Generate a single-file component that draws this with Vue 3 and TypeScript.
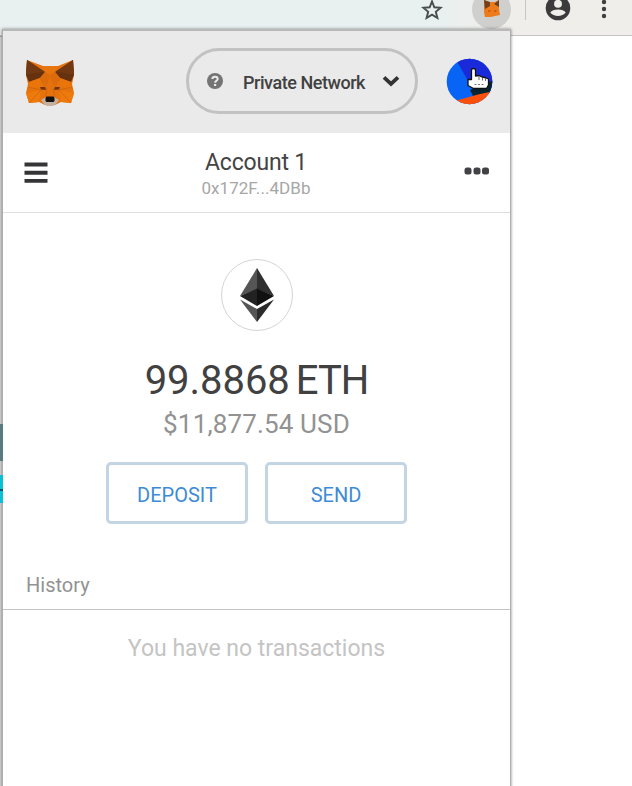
<script setup lang="ts">
interface Action {
  id: string
  label: string
}

const network: string = 'Private Network'
const account = { name: 'Account 1', address: '0x172F...4DBb' }
const balance = { amount: '99.8868', unit: 'ETH', fiat: '$11,877.54 USD' }
const actions: Action[] = [
  { id: 'deposit', label: 'DEPOSIT' },
  { id: 'send', label: 'SEND' },
]
</script>

<template>
  <div class="browser">
    <div class="toolbar">
      <svg class="star" width="22" height="22" viewBox="0 0 22 22">
        <path d="M11 2.4 13.3 8.3 19.8 8.7 14.8 12.8 16.4 19 11 15.6 5.6 19 7.2 12.8 2.2 8.7 8.7 8.3Z" fill="none" stroke="#4a4d4e" stroke-width="1.9" />
      </svg>
      <div class="extension">
        <svg width="18" height="18" viewBox="0 0 18 18">
          <path d="M1 0 6 2 12 2 16 0 16 9 17 15 12 16 8 17 2 17 1 12Z" fill="#ee7b1b" />
          <path d="M1 0 7 2 7 6 2 9ZM16 0 11 4 16 7Z" fill="#70401f" />
          <path d="M6 10 8 11 5 12ZM12 10 14 11 11 12Z" fill="#a84d08" />
        </svg>
      </div>
      <i class="divider"></i>
      <svg class="profile" width="26" height="26" viewBox="0 0 26 26">
        <circle cx="13" cy="13" r="12.3" fill="#3b3b3b" />
        <circle cx="13" cy="8.8" r="4" fill="#efeeeb" />
        <path d="M5.3 17.5C7.5 13.6 18.5 13.6 20.7 17.5 17.5 22 8.5 22 5.3 17.5Z" fill="#efeeeb" />
      </svg>
      <svg class="kebab" width="6" height="20" viewBox="0 0 6 20">
        <circle cx="3" cy="3" r="2.2" /><circle cx="3" cy="10" r="2.2" /><circle cx="3" cy="17" r="2.2" />
      </svg>
    </div>
    <div class="page">
      <i class="edge-line"></i>
      <i class="edge-block slate"></i>
      <i class="edge-block cyan"></i>
    </div>

    <main class="popup">
      <header class="header">
        <svg class="fox" width="50" height="48" viewBox="0 0 50 48">
          <path d="M2 1 18 7H33L48 1 49 16 47 25 49 34 46 44 36 43 30 46H20L14 43 4 44 1 34 3 25 1 16Z" fill="#e5720d" />
          <path d="M2 1 20 13 15 19 4 23 1 16Z" fill="#65310f" />
          <path d="M48 1 30 13 35 19 46 23 49 16Z" fill="#65310f" />
          <path d="M2 1 20 13 10 14 1 16Z" fill="#713812" />
          <path d="M48 1 30 13 40 14 49 16Z" fill="#713812" />
          <path d="M20 13 25 16 30 13 33 7H18Z" fill="#e8760f" />
          <path d="M20 13 25 16 22 27 15 19ZM30 13 25 16 28 27 35 19Z" fill="#dc6b0b" />
          <path d="M4 23 15 19 16 28 3 29ZM46 23 35 19 34 28 47 29Z" fill="#ea750a" />
          <path d="M1 34 16 31 14 43 4 44ZM49 34 34 31 36 43 46 44Z" fill="#ee7a0c" />
          <path d="M3 28 16 31 4 44M47 28 34 31 46 44M15 19 22 30M35 19 28 30M22 30 20 39M28 30 30 39" fill="none" stroke="#cb6208" stroke-width=".7" />
          <path d="M15 28 20 28 21 31 16 30.500ZM35 28 30 28 29 31 34 30.500Z" fill="#713611" />
          <path d="M16 41 21 38H29L34 41 31 45 28 47H22L19 45Z" fill="#c3b1a4" />
          <path d="M21.500 37.500H28.500L29.500 39V42L28.500 43H21.500L20.500 42V39Z" fill="#15110f" />
        </svg>
        <button class="network">
          <svg class="question" width="16" height="16" viewBox="0 0 16 16">
            <circle cx="8" cy="8" r="8" fill="#747474" />
            <path d="M5.4 6C5.5 2.8 10.7 2.9 10.7 6 10.7 7.8 8.1 7.8 8.1 9.8" fill="none" stroke="#ececec" stroke-width="2" />
            <rect x="7" y="11" width="2.2" height="2" fill="#ececec" />
          </svg>
          <span class="network-name">{{ network }}</span>
          <svg class="chevron" width="18" height="12" viewBox="0 0 18 12">
            <path d="M2 2.3 9 8.8 16 2.3" fill="none" stroke="#333" stroke-width="3.8" />
          </svg>
        </button>
        <svg class="avatar" width="48" height="48" viewBox="0 0 48 48">
          <defs><clipPath id="avatar-disc"><circle cx="23.5" cy="23.5" r="22.8" /></clipPath></defs>
          <g clip-path="url(#avatar-disc)">
            <path d="M0 0H48V48H0Z" fill="#0864f5" />
            <path d="M9 0H48V34L29 37 25 28Z" fill="#1a2ad8" />
            <path d="M24 32 48 22V35L27 38Z" fill="#06242f" />
            <path d="M5 44 32 36.5 48 33V48H5Z" fill="#fb500b" />
          </g>
          <path d="M25.500 12Q25.500 10.500 27.500 10.500T29.500 12V18L33 17.500 36 19 39 19.500 42.500 21V27L40.500 30.500H27.500L22 27.500V21.500H25.500Z" fill="#fff" stroke="#111" stroke-width="1.300" stroke-linejoin="round" />
          <path d="M33 18V22M36.500 19V22.500M39.500 20V23" stroke="#444" fill="none" stroke-width=".8" />
          <path d="M28.500 26.500H39" stroke="#777" stroke-width="1" stroke-dasharray="2 1.500" />
        </svg>
      </header>

      <section class="account">
        <svg class="menu" width="26" height="22" viewBox="0 0 26 22">
          <path d="M1.500 2.500H24.500M1.500 10.700H24.500M1.500 18.900H24.500" stroke="#353538" stroke-width="3.900" />
        </svg>
        <div class="identity">
          <span class="account-name">{{ account.name }}</span>
          <span class="address">{{ account.address }}</span>
        </div>
        <svg class="more" width="26" height="8" viewBox="0 0 26 8">
          <rect x=".5" y=".5" width="7" height="7" rx="2.500" /><rect x="9.500" y=".5" width="7" height="7" rx="2.500" /><rect x="18" y=".5" width="7" height="7" rx="2.500" />
        </svg>
      </section>

      <section class="balance">
        <div class="token">
          <svg width="34" height="54" viewBox="0 0 34 54">
            <path d="M17 0V21L0 28Z" fill="#555" />
            <path d="M17 0V21L34 28Z" fill="#303030" />
            <path d="M17 20.500V38L0 28Z" fill="#222" />
            <path d="M17 20.500V38L34 28Z" fill="#111" />
            <path d="M0 31.500 17 41V54Z" fill="#555" />
            <path d="M34 31.500 17 41V54Z" fill="#2b2b2b" />
          </svg>
        </div>
        <div class="amount">
          <span class="number">{{ balance.amount }}</span><span class="unit">{{ balance.unit }}</span>
        </div>
        <div class="fiat">{{ balance.fiat }}</div>
        <div class="actions">
          <button v-for="action in actions" :key="action.id" class="action">
            <span>{{ action.label }}</span>
          </button>
        </div>
      </section>

      <section class="history">
        <h2 class="history-title">History</h2>
        <p class="empty">You have no transactions</p>
      </section>
    </main>
  </div>
</template>

<style>
body {
  overflow: hidden;
}
</style>

<style scoped>
* {
  box-sizing: border-box;
}
.browser {
  position: relative;
  width: 632px;
  height: 786px;
  overflow: hidden;
  background: #fff;
  font-family: Roboto, sans-serif;
}
svg {
  display: block;
  flex: none;
}
button {
  font-family: inherit;
  background: none;
  padding: 0;
}
.toolbar {
  display: flex;
  align-items: flex-start;
  height: 36px;
  padding-left: 421px;
  background: linear-gradient(90deg, #e9f0f0 0 440px, #efeeeb 490px);
  border-bottom: 1px solid #c2c2c0;
}
.star {
  margin-top: -1px;
}
.extension {
  display: flex;
  justify-content: center;
  width: 39px;
  height: 39px;
  margin: -10px 0 0 29px;
  padding-top: 10px;
  border-radius: 50%;
  background: #cfcfcd;
}
.divider {
  width: 1px;
  height: 20px;
  margin-left: 14px;
  background: #c6c6c4;
}
.profile {
  margin: -5px 0 0 19px;
}
.kebab {
  margin: -1px 0 0 30px;
  fill: #3f3f3f;
}
.page {
  display: flex;
  flex-direction: column;
  width: 3px;
  height: 750px;
  background: #d6d6d6;
}
.edge-line {
  height: 1px;
  background: #aaa;
}
.edge-block {
  position: relative;
  z-index: 1;
  flex: none;
}
.slate {
  height: 37px;
  margin-top: 387px;
  background: #587b80;
}
.cyan {
  height: 28px;
  margin-top: 14px;
  background: linear-gradient(#0bc0d2 0 14px, #075c65 14px 16px, #0bc0d2 16px);
}
.popup {
  position: absolute;
  left: 2px;
  top: 29px;
  width: 509px;
  height: 770px;
  background: #fff;
  border: 1px solid #aeaeae;
  border-top: 2px solid #b8b9b8;
  box-shadow: 0 0 3px rgba(0, 0, 0, 0.45);
}
.header {
  display: flex;
  height: 102px;
  background: #eaeaea;
}
.fox {
  margin: 28px 0 0 22px;
}
.network {
  display: flex;
  align-items: center;
  width: 232px;
  height: 66px;
  margin: 17px 0 0 111px;
  padding-left: 18px;
  border: 3px solid #c2c2c2;
  border-radius: 33px;
}
.network-name {
  width: 123px;
  margin: 3px 0 0 20px;
  color: #414141;
  font-size: 18px;
  font-weight: 500;
  line-height: 24px;
  letter-spacing: -0.45px;
  text-align: left;
  white-space: nowrap;
}
.chevron {
  margin-left: 16px;
}
.avatar {
  margin: 27px 0 0 28px;
}
.account {
  display: flex;
  height: 80px;
  border-bottom: 1px solid #dedede;
}
.menu {
  margin: 29px 0 0 20px;
}
.identity {
  display: flex;
  flex-direction: column;
  align-items: center;
  width: 300px;
  margin: 16px 0 0 57px;
}
.account-name {
  color: #444;
  font-size: 23px;
  line-height: 27px;
  letter-spacing: -0.2px;
}
.address {
  color: #a6a6a6;
  font-size: 17px;
  line-height: 24px;
  letter-spacing: 0.05px;
}
.more {
  margin: 34px 0 0 58px;
  fill: #414146;
}
.balance {
  display: flex;
  flex-direction: column;
  align-items: center;
  height: 334px;
  padding-top: 46px;
}
.token {
  display: flex;
  align-items: center;
  justify-content: center;
  width: 72px;
  height: 72px;
  border: 1px solid #d4d4d4;
  border-radius: 50%;
}
.amount {
  display: flex;
  gap: 6px;
  margin-top: 26px;
  color: #414141;
  font-size: 40px;
  line-height: 48px;
}
.number {
  letter-spacing: -0.05px;
}
.unit {
  letter-spacing: -1px;
}
.fiat {
  margin-top: 2px;
  color: #929292;
  font-size: 26px;
  line-height: 34px;
  letter-spacing: 0.15px;
}
.actions {
  display: flex;
  gap: 17px;
  margin-top: 21px;
}
.action {
  width: 142px;
  height: 62px;
  border: 3px solid #c3d4e3;
  border-radius: 5px;
  color: #3d8bd4;
  font-size: 20px;
  line-height: 28px;
  padding-top: 4px;
}
.history-title {
  height: 63px;
  margin: 0;
  padding: 24px 0 0 23px;
  border-bottom: 1px solid #c4c4c4;
  color: #929292;
  font-size: 20px;
  font-weight: 400;
  line-height: 28px;
}
.empty {
  margin: 24px 0 0;
  color: #c4c4c4;
  font-size: 23px;
  line-height: 30px;
  text-align: center;
}
</style>
